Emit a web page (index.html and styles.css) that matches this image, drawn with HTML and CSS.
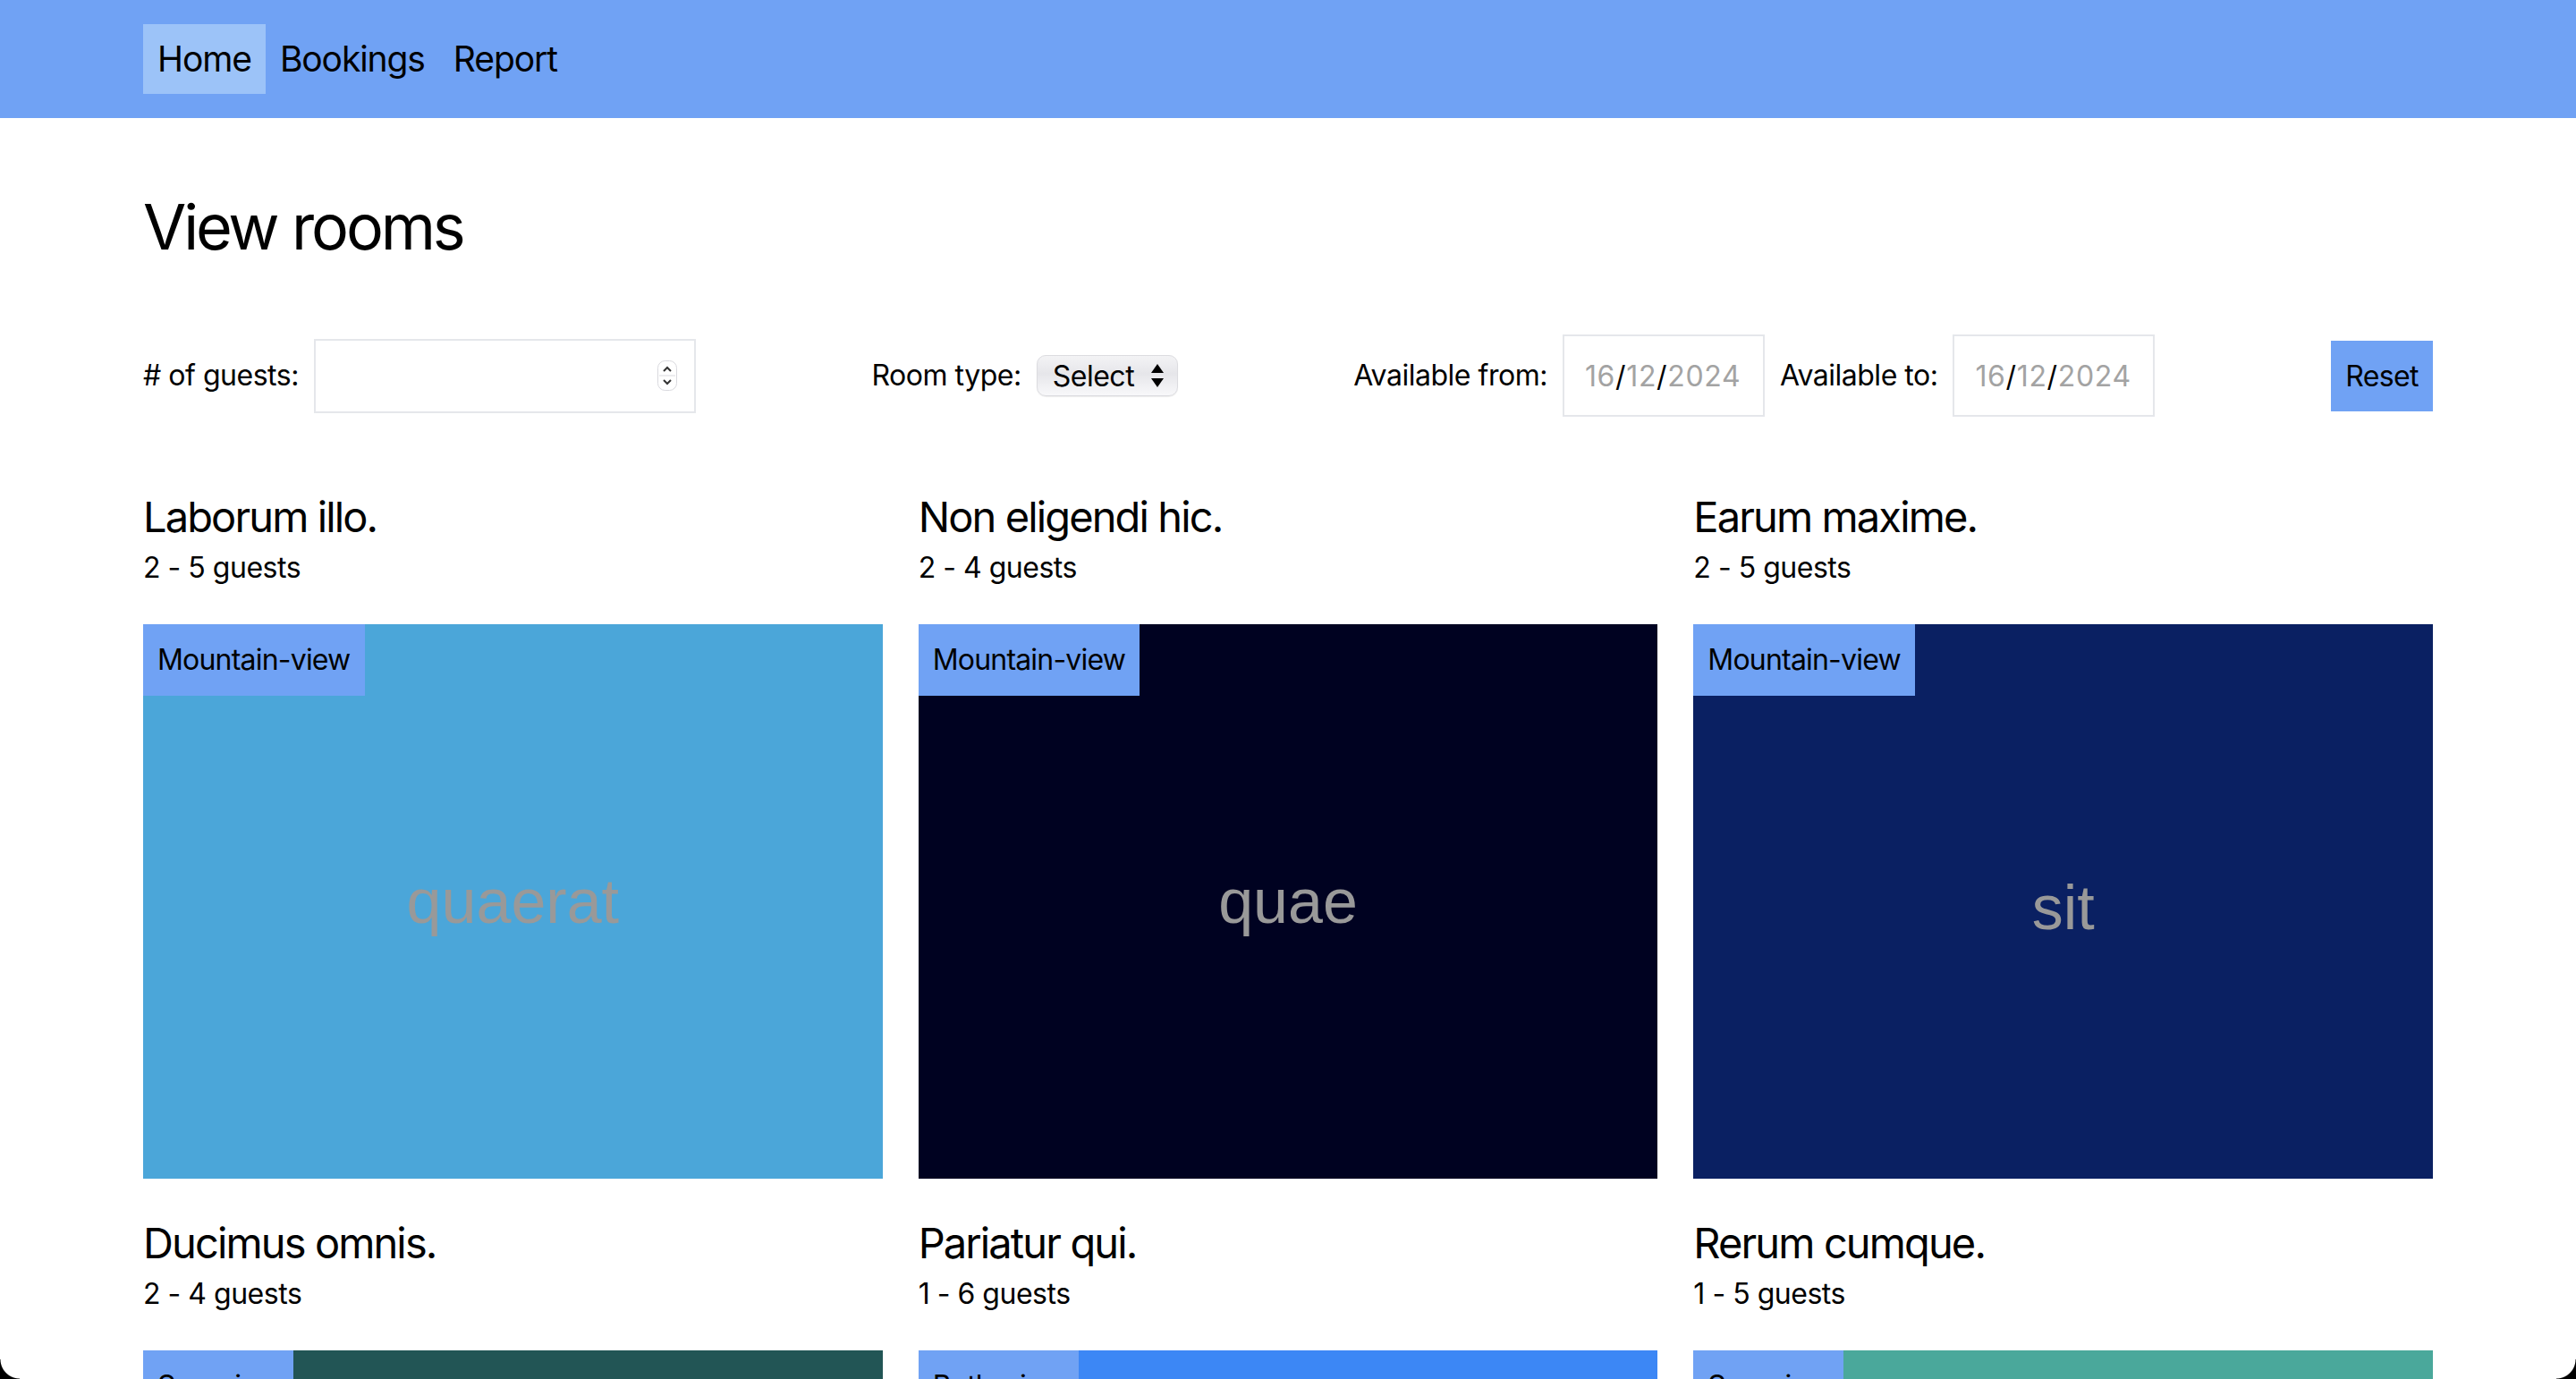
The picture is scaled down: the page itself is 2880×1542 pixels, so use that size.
FILE: index.html
```html
<!DOCTYPE html>
<html lang="en">
<head>
<meta charset="utf-8">
<title>View rooms</title>
<link rel="stylesheet" href="styles.css">
</head>
<body>
<nav class="topnav">
  <a class="nav-link active" href="#">Home</a>
  <a class="nav-link" href="#">Bookings</a>
  <a class="nav-link" href="#">Report</a>
</nav>
<main class="page">
  <h1 class="page-title">View rooms</h1>
  <form class="filters">
    <div class="filter">
      <span class="filter-label"># of guests:</span>
      <div class="num-input">
        <span class="spinner">
          <svg viewBox="0 0 22 34" width="22" height="34"><rect x="0.5" y="0.5" width="21" height="33" rx="8" fill="#fff" stroke="#d9d9de"/><line x1="2" y1="17" x2="20" y2="17" stroke="#d9d9de"/><path d="M7 12 L11 8 L15 12" fill="none" stroke="#333" stroke-width="2"/><path d="M7 22 L11 26 L15 22" fill="none" stroke="#333" stroke-width="2"/></svg>
        </span>
      </div>
    </div>
    <div class="filter">
      <span class="filter-label">Room type:</span>
      <div class="select">
        <span>Select</span>
        <svg class="select-arrows" viewBox="0 0 16 28" width="16" height="28"><path d="M8 1 L15 11 L1 11 Z" fill="#000"/><path d="M8 27 L15 17 L1 17 Z" fill="#000"/></svg>
      </div>
    </div>
    <div class="filter">
      <span class="filter-label">Available from:</span>
      <div class="date-input"><span class="dim">16</span>/<span class="dim">12</span>/<span class="dim">2024</span></div>
      <span class="filter-label">Available to:</span>
      <div class="date-input"><span class="dim">16</span>/<span class="dim">12</span>/<span class="dim">2024</span></div>
    </div>
    <button class="reset" type="button">Reset</button>
  </form>

  <section class="rooms">
    <article class="room">
      <h2 class="room-title">Laborum illo.</h2>
      <p class="room-guests">2 - 5 guests</p>
      <div class="room-image img-sky"><span class="badge">Mountain-view</span><span class="ph-text">quaerat</span></div>
    </article>
    <article class="room">
      <h2 class="room-title">Non eligendi hic.</h2>
      <p class="room-guests">2 - 4 guests</p>
      <div class="room-image img-night"><span class="badge">Mountain-view</span><span class="ph-text">quae</span></div>
    </article>
    <article class="room">
      <h2 class="room-title">Earum maxime.</h2>
      <p class="room-guests">2 - 5 guests</p>
      <div class="room-image img-navy"><span class="badge">Mountain-view</span><span class="ph-text ph-low">sit</span></div>
    </article>
    <article class="room">
      <h2 class="room-title">Ducimus omnis.</h2>
      <p class="room-guests">2 - 4 guests</p>
      <div class="room-image img-teal"><span class="badge">Sea-view</span><span class="ph-text">eum</span></div>
    </article>
    <article class="room">
      <h2 class="room-title">Pariatur qui.</h2>
      <p class="room-guests">1 - 6 guests</p>
      <div class="room-image img-blue"><span class="badge">Both-view</span><span class="ph-text">et</span></div>
    </article>
    <article class="room">
      <h2 class="room-title">Rerum cumque.</h2>
      <p class="room-guests">1 - 5 guests</p>
      <div class="room-image img-green"><span class="badge">Sea-view</span><span class="ph-text">ut</span></div>
    </article>
  </section>
</main>
<div class="window-corner corner-left"></div>
<div class="window-corner corner-right"></div>
</body>
</html>
```

FILE: styles.css
```css
* { box-sizing: border-box; }

html, body {
  margin: 0;
  padding: 0;
  background: #ffffff;
}

body {
  font-family: Inter, "Noto Sans", "Liberation Sans", sans-serif;
  color: #000;
  letter-spacing: -0.03em;
  overflow: hidden;
}

/* ---------- top navigation ---------- */
.topnav {
  height: 132px;
  background: #70a2f4;
  display: flex;
  align-items: center;
  padding: 0 160px;
}

.nav-link {
  display: block;
  height: 78px;
  line-height: 78px;
  padding: 0 16px;
  font-size: 39px;
  letter-spacing: -0.028em;
  color: #000;
  text-decoration: none;
}

.nav-link.active {
  background: #9cc3f8;
}

/* ---------- page ---------- */
.page {
  padding: 0 160px;
}

.page-title {
  margin: 82px 0 0;
  font-size: 70px;
  line-height: 80px;
  font-weight: 400;
  letter-spacing: -0.045em;
}

/* ---------- filters ---------- */
.filters {
  margin-top: 80px;
  height: 92px;
  display: flex;
  align-items: center;
  justify-content: space-between;
}

.filter {
  display: flex;
  align-items: center;
  gap: 17px;
}

.filter-label {
  font-size: 32px;
  line-height: 48px;
}

.num-input {
  width: 427px;
  height: 83px;
  border: 2px solid #e5e7eb;
  display: flex;
  align-items: center;
  justify-content: flex-end;
  padding-right: 19px;
}

.spinner {
  display: block;
  width: 22px;
  height: 34px;
}
.spinner svg { display: block; }

.select {
  width: 158px;
  height: 46px;
  padding: 0 14px 0 17px;
  display: flex;
  align-items: center;
  justify-content: space-between;
  font-size: 32px;
  border-radius: 10px;
  border: 1px solid #dcdce0;
  background: linear-gradient(#f3f3f5, #e6e6ea 45%, #f8f8fa);
  box-shadow: 0 1px 1px rgba(0,0,0,0.08);
}

.select-arrows { display: block; }

.date-input {
  width: 226px;
  height: 92px;
  padding: 0 0 0 23px;
  display: flex;
  align-items: center;
  border: 2px solid #e5e7eb;
  font-size: 32px;
  letter-spacing: 0.02em;
  color: #000;
}

.date-input .dim { color: #a3a3a3; }

.reset {
  width: 114px;
  height: 79px;
  padding: 0;
  border: 0;
  background: #70a2f4;
  font-family: inherit;
  font-size: 32px;
  letter-spacing: -0.02em;
  color: #000;
}

/* ---------- rooms grid ---------- */
.rooms {
  margin-top: 80px;
  display: grid;
  grid-template-columns: repeat(3, 1fr);
  gap: 40px;
}

.room-title {
  margin: 0;
  font-size: 47px;
  line-height: 64px;
  font-weight: 400;
  letter-spacing: -0.04em;
}

.room-guests {
  margin: 0;
  padding-top: 2px;
  font-size: 32px;
  line-height: 46px;
}

.room-image {
  position: relative;
  margin-top: 40px;
  aspect-ratio: 4 / 3;
  display: flex;
  align-items: center;
  justify-content: center;
}

.badge {
  position: absolute;
  top: 0;
  left: 0;
  padding: 16px;
  font-size: 32px;
  line-height: 48px;
  letter-spacing: -0.025em;
  background: #70a2f4;
  color: #000;
}

.ph-text {
  font-family: "Liberation Sans", Arial, sans-serif;
  font-size: 70px;
  letter-spacing: 0;
  color: #999999;
}

.ph-low { padding-top: 14px; }

.img-sky   { background: #4ba6d9; }
.img-night { background: #000221; }
.img-navy  { background: #0a2062; }
.img-teal  { background: #225555; }
.img-blue  { background: #3c87f5; }
.img-green { background: #4aa89b; }

/* ---------- rounded window corners of the screenshot ---------- */
.window-corner {
  position: fixed;
  bottom: 0;
  width: 22px;
  height: 22px;
}
.corner-left {
  left: 0;
  background: radial-gradient(circle at 100% 0, transparent 21px, #000 22px);
}
.corner-right {
  right: 0;
  background: radial-gradient(circle at 0 0, transparent 21px, #000 22px);
}
```
